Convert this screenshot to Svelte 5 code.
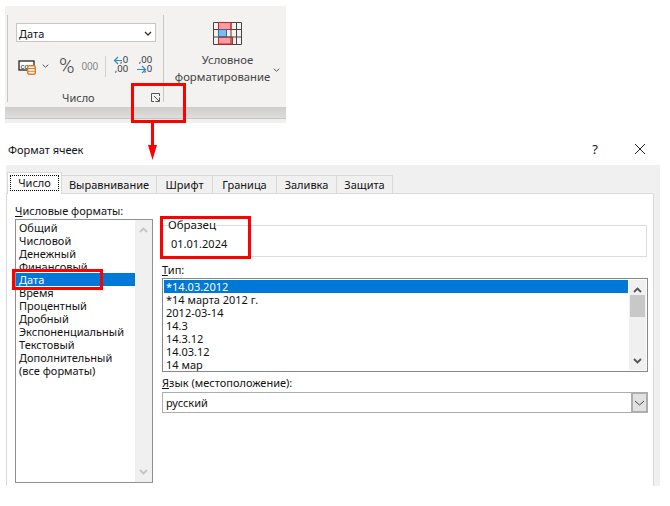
<script>
	const tabs = ['Число', 'Выравнивание', 'Шрифт', 'Граница', 'Заливка', 'Защита'];
	const formats = ['Общий', 'Числовой', 'Денежный', 'Финансовый', 'Дата', 'Время', 'Процентный', 'Дробный', 'Экспоненциальный', 'Текстовый', 'Дополнительный', '(все форматы)'];
	const types = ['*14.03.2012', '*14 марта 2012 г.', '2012-03-14', '14.3', '14.3.12', '14.03.12', '14 мар'];
	const tabWidths = [55, 95, 56, 64, 60, 56];
</script>

<div class="page">
	<section class="ribbon">
		<div class="ribbon-body">
			<div class="group number">
				<div class="format-select">
					<span>Дата</span>
					<svg width="8" height="5" viewBox="0 0 8 5"><path d="M1 1l3 3 3-3" fill="none" stroke="#333" stroke-width="1.3" /></svg>
				</div>
				<div class="tools">
					<svg class="money" width="19" height="16" viewBox="0 0 19 16">
						<rect x="1" y="1" width="15" height="9" fill="#fff" stroke="#222" stroke-width="1.3" />
						<text x="2.5" y="8.5" font-size="8" fill="#333" font-family="Liberation Sans">cc</text>
						<rect x="9.7" y="5.7" width="7.6" height="8.6" rx="2" fill="#fff" stroke="#e3791f" stroke-width="1.4" />
						<path d="M10 8.5h7M10 11.2h7" stroke="#e3791f" stroke-width="1.1" />
					</svg>
					<svg class="tiny-chev" width="7" height="4" viewBox="0 0 7 4"><path d="M.7.7l2.8 2.5L6.3.7" fill="none" stroke="#555" /></svg>
					<span class="percent">%</span>
					<span class="thousands">000</span>
					<i class="tool-sep"></i>
					<div class="dec">
						<svg class="dec-arrow" width="9" height="9" viewBox="0 0 9 9"><path d="M9 4.5H1.5M5 1L1.5 4.5 5 8" fill="none" stroke="#2a8dd4" stroke-width="1.2" /></svg>
						<span class="top">,0</span>
						<span class="bottom">,00</span>
					</div>
					<div class="dec second">
						<span class="top">,00</span>
						<svg class="dec-arrow lower" width="10" height="9" viewBox="0 0 10 9"><path d="M0 4.5h8.5M5 1l3.5 3.5L5 8" fill="none" stroke="#2a8dd4" stroke-width="1.2" /></svg>
						<span class="bottom">,0</span>
					</div>
				</div>
				<div class="group-foot">
					<span>Число</span>
					<svg width="9" height="9" viewBox="0 0 9 9"><path d="M8.5 3V.5H.5v8H3M3 3l5 5M8.5 4.5v4h-4" fill="none" stroke="#555" /></svg>
				</div>
			</div>
			<div class="group cond">
				<svg width="29" height="23" viewBox="0 0 29 23">
					<rect x="5.5" y=".5" width="12.5" height="7" fill="#ff9ba2" />
					<rect x="5.5" y="7.5" width="8" height="7.5" fill="#7fb9ea" />
					<rect x="5.5" y="15" width="14" height="7" fill="#ff9ba2" />
					<path d="M.5.5h28v22H.5zM.5 7.5h28M.5 15h28M5.5.5v22M18 .5v22M23.5.5v22" fill="none" stroke="#444" />
					<path d="M5.5.5H18v7H5.5zM5.5 15H19.5v7H5.5z" fill="none" stroke="#e02020" />
					<path d="M5.5 7.5H13.5V15H5.5z" fill="none" stroke="#1f6fb5" />
				</svg>
				<span class="cond-text">Условное</span>
				<span class="cond-text">форматирование <svg width="7" height="4" viewBox="0 0 7 4"><path d="M.7.7l2.8 2.5L6.3.7" fill="none" stroke="#555" /></svg></span>
			</div>
		</div>
		<div class="band"></div>
	</section>

	<section class="dialog">
		<header class="dialog-head">
			<span>Формат ячеек</span>
			<span class="help">?</span>
			<svg class="close" width="12" height="12" viewBox="0 0 12 12"><path d="M1 1l10 10M11 1L1 11" stroke="#222" fill="none" /></svg>
		</header>
		<div class="dialog-body">
			<div class="tabs">
				{#each tabs as tab, i}
					<div class="tab" class:active={i === 0} style="width: {tabWidths[i]}px"><span>{tab}</span></div>
				{/each}
			</div>
			<div class="panel">
				<div class="col-formats">
					<div class="label"><u>Ч</u>исловые форматы:</div>
					<div class="listbox formats">
						<div class="rows">
							{#each formats as f, i}
								<div class="row" class:selected={i === 4}><span>{f}</span></div>
							{/each}
						</div>
						<div class="scrollbar">
							<svg width="9" height="6" viewBox="0 0 9 6"><path d="M1 5l3.5-3.5L8 5" fill="none" stroke="#c4c4c4" stroke-width="1.8" /></svg>
							<svg width="9" height="6" viewBox="0 0 9 6"><path d="M1 1l3.5 3.5L8 1" fill="none" stroke="#c4c4c4" stroke-width="1.8" /></svg>
						</div>
					</div>
				</div>
				<div class="col-detail">
					<fieldset class="sample">
						<legend>Образец</legend>
						<div>01.01.2024</div>
					</fieldset>
					<div class="label type-label"><u>Т</u>ип:</div>
					<div class="listbox types">
						<div class="rows">
							{#each types as t, i}
								<div class="row" class:selected={i === 0}>{t}</div>
							{/each}
						</div>
						<div class="scrollbar">
							<svg width="9" height="6" viewBox="0 0 9 6"><path d="M1 5l3.5-3.5L8 5" fill="none" stroke="#555" stroke-width="1.8" /></svg>
							<i class="thumb"></i>
							<svg class="down" width="9" height="6" viewBox="0 0 9 6"><path d="M1 1l3.5 3.5L8 1" fill="none" stroke="#555" stroke-width="1.8" /></svg>
						</div>
					</div>
					<div class="label lang-label"><u>Я</u>зык (местоположение):</div>
					<div class="combo">
						<span>русский</span>
						<div class="combo-btn">
							<svg width="11" height="6" viewBox="0 0 11 6"><path d="M1 1l4.5 4L10 1" fill="none" stroke="#444" /></svg>
						</div>
					</div>
				</div>
			</div>
		</div>
	</section>

	<!-- red annotations drawn over the screenshot -->
	<div class="mark launcher-mark"></div>
	<svg class="arrow" width="11" height="38" viewBox="0 0 11 38"><path d="M5.5 0v24" stroke="#f00" stroke-width="3" /><path d="M1 22h9l-4.5 15z" fill="#f00" /></svg>
	<div class="mark sample-mark"></div>
	<div class="mark date-mark"></div>
</div>

<style>
	:global(body) {
		background: #fff;
	}
	.page {
		position: relative;
		width: 670px;
		height: 506px;
		overflow: hidden;
		font-family: 'Noto Sans', sans-serif;
		font-size: 11px;
		color: #111;
		padding-top: 6px;
		box-sizing: border-box;
	}
	.ribbon {
		width: 281px;
		height: 117px;
		margin-left: 5px;
		background: #f0f0f0;
	}
	.ribbon-body {
		display: flex;
		height: 101px;
		background: #f3f2f1;
		padding: 9px 0 0 2px;
		box-sizing: border-box;
	}
	.group {
		height: 87px;
		box-sizing: border-box;
	}
	.number {
		width: 157px;
		border-left: 1px solid #c8c6c4;
		border-right: 1px solid #c8c6c4;
		padding: 8px 0 0 8px;
		display: flex;
		flex-direction: column;
	}
	.format-select {
		height: 23px;
		width: 140px;
		box-sizing: border-box;
		background: #fff;
		border: 1px solid #c8c6c4;
		display: flex;
		align-items: center;
		justify-content: space-between;
		padding: 2px 3px 0 2px;
	}
	.tools {
		display: flex;
		align-items: center;
		height: 24px;
		margin-top: 12px;
	}
	.money {
		margin-left: 2px;
		margin-top: 3px;
	}
	.tiny-chev {
		margin-left: 5px;
	}
	.percent {
		font-size: 21px;
		font-weight: 300;
		color: #444;
		margin-left: 10px;
		font-family: 'Roboto', sans-serif;
	}
	.thousands {
		font-size: 10px;
		color: #8a8a8a;
		margin-left: 7px;
		letter-spacing: -0.2px;
	}
	.tool-sep {
		width: 1px;
		height: 21px;
		background: #d2d0ce;
		margin-left: 7px;
	}
	.dec {
		position: relative;
		width: 15px;
		height: 20px;
		margin-left: 7px;
		font-size: 9.5px;
		color: #333;
		flex: none;
	}
	.dec.second {
		margin-left: 9px;
	}
	.dec span {
		position: absolute;
		right: 0;
		line-height: 10px;
	}
	.dec .top {
		top: -1px;
	}
	.dec .bottom {
		top: 8px;
	}
	.dec-arrow {
		position: absolute;
		top: 0;
		left: 0;
	}
	.dec-arrow.lower {
		top: 9px;
	}
	.group-foot {
		display: flex;
		align-items: center;
		justify-content: space-between;
		margin-top: 12px;
		padding: 0 3px 0 46px;
		color: #444;
	}
	.cond {
		flex: 1;
		display: flex;
		flex-direction: column;
		align-items: center;
		padding: 7px 0 0 5px;
		color: #444;
		font-size: 11.3px;
		line-height: 16px;
	}
	.cond svg:first-child {
		margin-bottom: 7px;
	}
	.cond-text svg {
		vertical-align: 2px;
	}
	.band {
		height: 11px;
		background: linear-gradient(#cfcdcb, #dededd);
		border-bottom: 1px solid #c6c6c6;
	}
	.dialog-head {
		display: flex;
		align-items: center;
		height: 42px;
		padding: 10px 0 0 8px;
		box-sizing: border-box;
	}
	.help {
		margin-left: auto;
		margin-right: 36px;
		font-size: 13px;
	}
	.close {
		margin-right: 24px;
	}
	.dialog-body {
		margin-left: 6px;
		width: 654px;
		height: 321px;
		background: #f0f0f0;
		padding: 7px 6px 0 0;
		box-sizing: border-box;
		display: flex;
		flex-direction: column;
	}
	.tabs {
		display: flex;
		height: 21px;
		padding-left: 1px;
		position: relative;
		z-index: 1;
	}
	.tab {
		box-sizing: border-box;
		height: 18px;
		margin-top: 3px;
		border: 1px solid #d9d9d9;
		border-left: 0;
		border-bottom: 0;
		display: flex;
		align-items: center;
		justify-content: center;
	}
	.tab.active {
		height: 22px;
		margin-top: 0;
		background: #fff;
		border-left: 1px solid #d9d9d9;
	}
	.tab.active span {
		outline: 1px dotted #000;
		padding: 0 6px;
		line-height: 14px;
		margin-top: -1px;
		width: 47px;
		box-sizing: border-box;
		text-align: center;
	}
	.panel {
		flex: 1;
		background: #fff;
		border: 1px solid #d9d9d9;
		border-bottom: 0;
		display: flex;
		padding-left: 8px;
	}
	.label {
		line-height: 15px;
		height: 15px;
	}
	.col-formats {
		width: 138px;
		padding-top: 9px;
	}
	.listbox {
		border: 1px solid #828790;
		box-sizing: border-box;
		display: flex;
		background: #fff;
	}
	.formats {
		height: 264px;
		margin-top: 1px;
		border-color: #919191;
	}
	.rows {
		flex: 1;
		padding-top: 1px;
		min-width: 0;
	}
	.row {
		height: 13px;
		line-height: 13px;
		padding-left: 3px;
		white-space: nowrap;
	}
	.selected {
		background: #0078d7;
		color: #fff;
	}
	.scrollbar {
		width: 17px;
		background: #f0f0f0;
		display: flex;
		flex-direction: column;
		align-items: center;
		justify-content: space-between;
		padding: 7px 0;
		box-sizing: border-box;
	}
	.col-detail {
		margin-left: 9px;
		width: 486px;
		padding-top: 24px;
	}
	.sample {
		margin: 0;
		padding: 0 0 0 8px;
		height: 39px;
		border: 1px solid #dcdcdc;
		box-sizing: border-box;
		width: 485px;
	}
	.sample legend {
		padding: 0;
		margin-left: -3px;
		line-height: 14px;
		background: #fff;
		font-size: 11.5px;
	}
	.sample div {
		margin-top: 5px;
		line-height: 14px;
	}
	.type-label {
		margin-top: 5px;
		line-height: 16px;
	}
	.types {
		height: 94px;
		margin-top: 1px;
		overflow: hidden;
	}
	.types .rows {
		padding: 1px 0 0 1px;
	}
	.types .row {
		padding-left: 2px;
	}
	.types .scrollbar {
		justify-content: flex-start;
		padding: 7px 0 6px;
		margin: 1px;
	}
	.thumb {
		width: 15px;
		height: 22px;
		background: #c8c8c8;
		margin-top: 2px;
		flex: none;
	}
	.down {
		margin-top: auto;
	}
	.lang-label {
		margin-top: 3px;
	}
	.combo {
		height: 21px;
		margin-top: 2px;
		width: 486px;
		box-sizing: border-box;
		border: 2px solid #adadad;
		border-width: 1px 0 1px 1px;
		display: flex;
		align-items: center;
		padding-left: 3px;
		justify-content: space-between;
	}
	.combo-btn {
		width: 17px;
		height: 21px;
		box-sizing: border-box;
		border: 2px solid #adadad;
		background: #e1e1e1;
		display: flex;
		align-items: center;
		justify-content: center;
	}
	.mark {
		position: absolute;
		border: 3px solid #f00;
		box-sizing: border-box;
	}
	.launcher-mark {
		left: 131px;
		top: 83px;
		width: 55px;
		height: 40px;
	}
	.sample-mark {
		left: 160px;
		top: 216px;
		width: 91px;
		height: 43px;
	}
	.date-mark {
		left: 12px;
		top: 269px;
		width: 91px;
		height: 21px;
	}
	.arrow {
		position: absolute;
		left: 147px;
		top: 123px;
	}
</style>
